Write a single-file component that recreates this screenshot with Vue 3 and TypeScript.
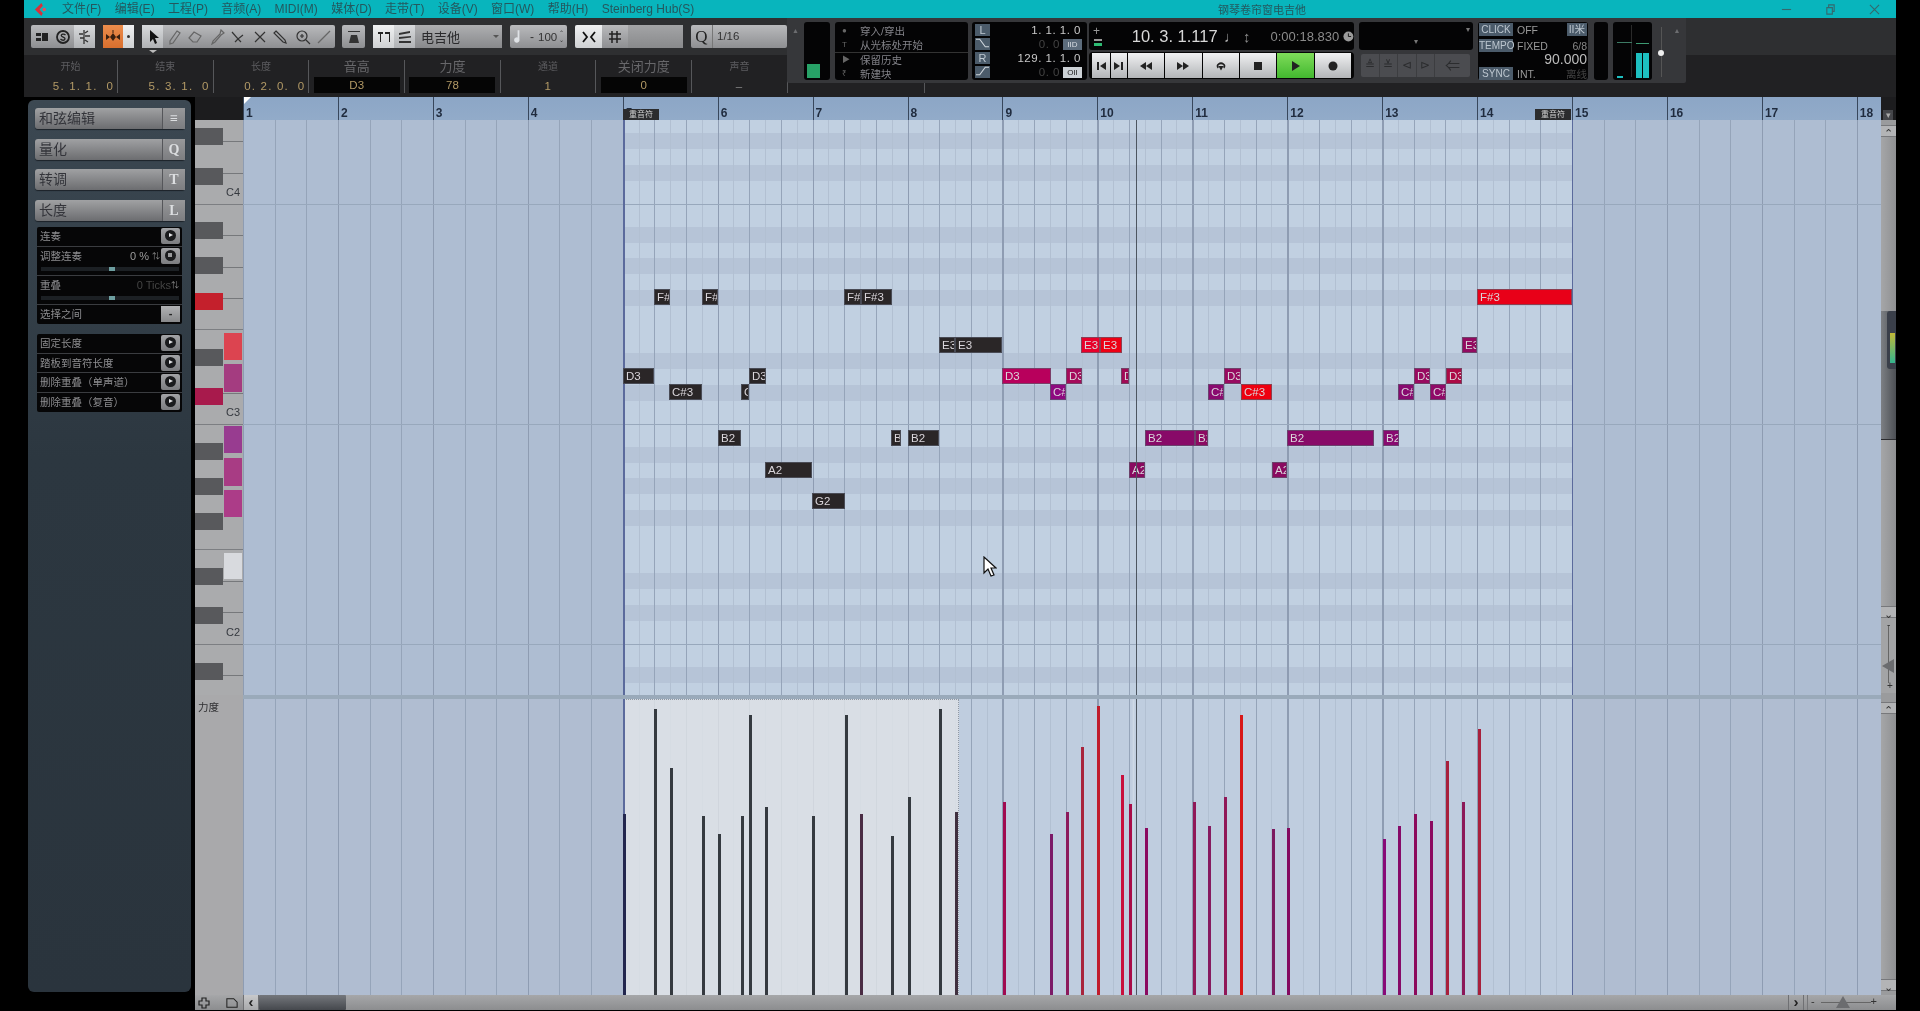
<script setup lang="ts">
const menus = ['文件(F)', '编辑(E)', '工程(P)', '音频(A)', 'MIDI(M)', '媒体(D)', '走带(T)', '设备(V)', '窗口(W)', '帮助(H)', 'Steinberg Hub(S)']

const infoCols = [
  { label: '开始', value: '5. 1. 1.  0', pos: true },
  { label: '结束', value: '5. 3. 1.  0', pos: true },
  { label: '长度', value: '0. 2. 0.  0', pos: true },
  { label: '音高', value: 'D3', big: true },
  { label: '力度', value: '78', big: true },
  { label: '通道', value: '1' },
  { label: '关闭力度', value: '0', big: true },
  { label: '声音', value: '–' }
]

const toolIcons = [
  'M5 1v12l3-3 2 5 2-1-2-5h4z',
  'M11 2l3 2-7 10-3 1 0-3z',
  'M2 9l5-6 7 4-4 6H6z',
  'M12 1l3 3-3 2-6 7-3 2 1-3 7-7z',
  'M2 3l6 7 5-4M8 10l-3 3M8 10l3 3',
  'M3 3l10 10M13 3L3 13',
  'M3 2l9 9 1 3-3-1-9-9z',
  'M7 2a5 5 0 1 1 0 10a5 5 0 0 1 0-10M11 11l4 4M7 5v4M5 7h4',
  'M2 14L14 2'
]

const BAR = 94.93
const ORIGIN = 243.5
const LOOP_START = 623.4
const LOOP_END = 1572.4

const bars = Array.from({ length: 18 }, (_, i) => ({ n: i + 1, x: (i * BAR) }))

// grid lines: bars, thirds of a bar, and sixths inside the locators
const gridLines: { x: number; w: number; c: string }[] = []
for (let i = 0; i < 104; i++) {
  const x = (i * BAR) / 6
  const abs = x + ORIGIN
  if (i % 6 === 0) gridLines.push({ x, w: 1.4, c: '#8e9cb2' })
  else if (i % 2 === 0) gridLines.push({ x, w: 1, c: '#95a4b9' })
  else if (abs > LOOP_START && abs < LOOP_END) gridLines.push({ x, w: 1, c: '#b2c0d2' })
}

const cLines = [204, 424, 644]
const bands = [133, 165, 227, 258, 290, 353, 385, 447, 478, 510, 573, 605, 667]

const blackKeys = [
  { y: 128 }, { y: 168 }, { y: 222 }, { y: 257 }, { y: 293, c: '#c4202c' }, { y: 349 }, { y: 388, c: '#a81a4c' },
  { y: 443 }, { y: 478 }, { y: 513 }, { y: 568 }, { y: 607 }, { y: 663 }
]
const whiteKeys = [
  { y: 333, h: 27, c: '#dc4450' }, { y: 364, h: 28, c: '#a43c80' }, { y: 426, h: 27, c: '#983c90' },
  { y: 458, h: 28, c: '#a83c84' }, { y: 490, h: 27, c: '#ac3c88' }, { y: 553, h: 26, c: '#d8dade' }
]
const keyLines = [141, 173, 235, 267, 298, 393, 581, 612, 675]
const keyFull = [204, 329, 424, 549, 644]
const keyLabels = [{ t: 'C4', y: 185 }, { t: 'C3', y: 405 }, { t: 'C2', y: 625 }]

type Note = [string, number, number, number, string]
const DARK = '#2a2627'
const PUR = '#880a68'
const notes: Note[] = [
  ['F#', 654, 670, 289, DARK], ['F#', 702, 718, 289, DARK], ['F#', 844, 861, 289, DARK], ['F#3', 861, 892, 289, DARK],
  ['E3', 939, 955, 337, DARK], ['E3', 955, 1002, 337, DARK], ['D3', 623, 654, 368, DARK], ['C#3', 669, 702, 384, DARK],
  ['D3', 749, 766, 368, DARK], ['C', 741, 749, 384, DARK], ['B2', 718, 741, 430, DARK], ['B', 891, 901, 430, DARK],
  ['B2', 908, 939, 430, DARK], ['A2', 765, 812, 462, DARK], ['G2', 812, 845, 493, DARK],
  ['D3', 1002, 1051, 368, '#b8005c'], ['C#', 1050, 1066, 384, '#8e0a80'], ['D3', 1066, 1082, 368, '#a50a5a'],
  ['E3', 1081, 1100, 337, '#e8002a'], ['E3', 1100, 1122, 337, '#ee0014'], ['D', 1121, 1129, 368, '#a00a55'],
  ['A2', 1129, 1145, 462, '#8a0a60'], ['B2', 1145, 1195, 430, PUR], ['B2', 1195, 1208, 430, '#8c0a62'],
  ['C#', 1208, 1224, 384, '#8a0a70'], ['D3', 1224, 1241, 368, '#980a60'], ['C#3', 1241, 1272, 384, '#ee0010'],
  ['A2', 1272, 1287, 462, '#8a0a60'], ['B2', 1287, 1374, 430, PUR], ['B2', 1383, 1399, 430, '#880a70'],
  ['C#', 1398, 1414, 384, '#880a70'], ['D3', 1414, 1430, 368, '#980a60'], ['C#', 1430, 1446, 384, '#900a68'],
  ['D3', 1446, 1462, 368, '#ac0a45'], ['E3', 1462, 1477, 337, '#920a60'], ['F#3', 1477, 1572, 289, '#e80018']
]

// [x, top, colour] in screen pixels
const vel: [number, number, string][] = [
  [622.5, 814, '#22264e'], [654, 709, '#353a40'], [669.5, 768, '#353a40'], [701.5, 816, '#353a40'], [717.5, 834, '#353a40'],
  [741, 816, '#353a40'], [748.5, 715, '#353a40'], [765, 807, '#353a40'], [812, 816, '#353a40'], [844.5, 715, '#353a40'],
  [860, 814, '#4a2c44'], [891, 836, '#353a40'], [907.5, 797, '#353a40'], [938.5, 709, '#353a40'], [954.5, 812, '#40303f'],
  [1002.5, 802, '#a00a50'], [1050, 834, '#7c1a68'], [1065.5, 812, '#8c1a5c'], [1081, 747, '#a8243c'], [1096.5, 706, '#c01c2c'],
  [1121, 775, '#c8103c'], [1129, 804, '#a80c48'], [1144.5, 828, '#8a0a60'], [1192.5, 802, '#901858'], [1208, 826, '#861a60'],
  [1223.5, 797, '#901858'], [1240, 715, '#d81818'], [1271.5, 829, '#7c1a60'], [1287, 828, '#840a60'], [1382.5, 839, '#880a78'],
  [1398, 826, '#860a68'], [1413.5, 814, '#8c0a5c'], [1429.5, 821, '#8c0a60'], [1446, 761, '#a8203c'], [1461.5, 802, '#8c1858'],
  [1477.5, 729, '#a8203c']
]

const sideButtons = [
  { label: '和弦编辑', key: '≡' }, { label: '量化', key: 'Q' }, { label: '转调', key: 'T' }, { label: '长度', key: 'L' }
]
const sideBottom = ['固定长度', '踏板到音符长度', '删除重叠（单声道）', '删除重叠（复音）']
</script>

<template>
  <div class="app">
    <header class="titlebar">
      <svg class="logo" viewBox="0 0 16 16"><path d="M9 1L2 8l7 7 1.500-3L7 8l3.500-4z" fill="#d8303a" /><circle cx="12" cy="8" r="1.800" fill="#e8505a" /></svg>
      <nav class="menus"><span v-for="m in menus" :key="m">{{ m }}</span></nav>
      <span class="wintitle">钢琴卷帘窗电吉他</span>
      <div class="winbtns">
        <svg viewBox="0 0 12 12"><path d="M1 6h10" /></svg>
        <svg viewBox="0 0 12 12"><path d="M2 4h6v7H2zM4 4V1h6v7H8" /></svg>
        <svg viewBox="0 0 12 12"><path d="M1 1l10 10M11 1L1 11" /></svg>
      </div>
    </header>

    <section class="toolbar">
      <div class="group g-a">
        <div class="cell"><svg viewBox="0 0 16 16"><path d="M2 4h5v3H2zM2 9h5v3H2zM8 4h6v8H8z" fill="#222" /></svg></div>
        <div class="cell"><svg viewBox="0 0 16 16"><circle cx="8" cy="8" r="6" fill="none" stroke="#222" stroke-width="1.8" /><path d="M10.5 6C9 4.5 6 5 6.3 6.7S10 8 10 9.8 7 11.800 5.500 10" fill="none" stroke="#222" stroke-width="1.300" /></svg></div>
        <div class="cell light"><svg viewBox="0 0 16 16"><path d="M8 1v14M3 5h4M9 4l3-2M9 7h5M4 9h4M9 11l3 2" fill="none" stroke="#333" stroke-width="1.300" /></svg></div>
      </div>
      <div class="group g-o">
        <div class="cell orange"><svg viewBox="0 0 16 16"><path d="M1 5l4 3-4 3zM15 5l-4 3 4 3zM8 4l3 4-3 4-3-4zM7.500 1h1v3h-1z" fill="#3a2010" /></svg></div>
        <div class="cell white"><i class="dot"></i></div>
      </div>
      <div class="group g-t">
        <div v-for="(d, i) in toolIcons" :key="i" class="cell" :class="{ light: i === 0 }">
          <svg viewBox="0 0 16 16"><path :d="d" :fill="i === 0 ? '#111' : 'none'" :stroke="i === 0 ? 'none' : i > 3 && i < 8 ? '#333' : '#666'" stroke-width="1.200" /></svg>
        </div>
        <i class="tool-mark"></i>
      </div>
      <div class="group g-b">
        <div class="cell"><svg viewBox="0 0 16 16"><path d="M2 2h12v1H2zM3 14l2-8h6l2 8z" fill="#333" /></svg></div>
      </div>
      <div class="group g-s">
        <div class="cell white sq"><svg viewBox="0 0 16 16"><path d="M2 3h5v2H5v8H4V5H2zM9 3h5v10h-1V5H9z" fill="#222" /></svg></div>
        <div class="cell light sq"><svg viewBox="0 0 16 16"><path d="M2 4l11-2v2L2 6zM2 8l12-1v1.500L2 10zM2 12h12v2H2z" fill="#333" /></svg></div>
        <div class="select">电吉他<i class="caret"></i></div>
      </div>
      <div class="group g-v">
        <svg class="note-ic" viewBox="0 0 10 16"><path d="M6 1v10a3 3 0 1 1-2-2V1z" fill="#dfe2e6" /></svg>
        <span class="dash">-</span><span class="v100">100</span><span class="spin">⌃<br />⌄</span>
      </div>
      <div class="group g-q">
        <div class="cell white q1"><svg viewBox="0 0 16 16"><path d="M2 3l4 5-4 5M14 3l-4 5 4 5" fill="none" stroke="#111" stroke-width="1.800" /></svg></div>
        <div class="cell q2"><svg viewBox="0 0 16 16"><path d="M5 2v12M10 2v12M2 5h12M2 10h12" fill="none" stroke="#222" stroke-width="1.500" /></svg></div>
        <div class="q-rest"></div>
      </div>
      <div class="group g-z">
        <div class="zq">Q</div>
        <div class="zv">1/16</div>
      </div>

      <div class="transport">
        <div class="tp-arrow">▲</div>
        <div class="box b-meter"><i class="green"></i></div>
        <div class="box b-punch">
          <div class="pr"><i>●</i>穿入/穿出</div>
          <div class="pr under"><i>T</i>从光标处开始</div>
          <div class="pr"><i>▶</i>保留历史</div>
          <div class="pr"><i>₹</i>新建块</div>
        </div>
        <div class="box b-loc">
          <div class="lr"><b class="tag">L</b><span class="lv">1. 1. 1.  0</span></div>
          <div class="lr"><b class="tag"><svg viewBox="0 0 14 10"><path d="M0 1h4l6 8h4" fill="none" stroke="#cfd6dc" stroke-width="1.200" /></svg></b><span class="lv dim short">0.  0</span><b class="mini">IID</b></div>
          <div class="lr"><b class="tag">R</b><span class="lv">129. 1. 1.  0</span></div>
          <div class="lr"><b class="tag"><svg viewBox="0 0 14 10"><path d="M0 9h4l6-8h4" fill="none" stroke="#cfd6dc" stroke-width="1.200" /></svg></b><span class="lv dim short">0.  0</span><b class="mini lit">OII</b></div>
        </div>
        <div class="main-col">
          <div class="box time">
            <div class="pm"><span>+</span><i></i><i class="g"></i></div>
            <span class="t1">10. 3. 1.117</span>
            <span class="t-note">♩</span><span class="t-arr">↕</span>
            <span class="t2">0:00:18.830</span>
            <svg class="clock" viewBox="0 0 12 12"><circle cx="6" cy="6" r="5.500" fill="#9a9a9a" /><path d="M6 2.500V6h3" fill="none" stroke="#111" /></svg>
          </div>
          <div class="tbtns">
            <div class="tb w18"><svg viewBox="0 0 12 12"><path d="M2 2h2v8H2zM11 2v8L5 6z" /></svg></div>
            <div class="tb w17"><svg viewBox="0 0 12 12"><path d="M10 2H8v8h2zM1 2v8l6-4z" /></svg></div>
            <div class="tb"><svg viewBox="0 0 14 12"><path d="M7 2v8L1 6zM13 2v8L7 6z" /></svg></div>
            <div class="tb"><svg viewBox="0 0 14 12"><path d="M1 2v8l6-4zM7 2v8l6-4z" /></svg></div>
            <div class="tb"><svg viewBox="0 0 16 12"><path d="M5 8a4 3 0 1 1 6 0" fill="none" stroke="#222" stroke-width="2" /><path d="M5 6h6l-3 5z" /></svg></div>
            <div class="tb"><svg viewBox="0 0 12 12"><path d="M2 2h8v8H2z" /></svg></div>
            <div class="tb play"><svg viewBox="0 0 12 12"><path d="M3 1v10l8-5z" /></svg></div>
            <div class="tb"><svg viewBox="0 0 12 12"><circle cx="6" cy="6" r="4.500" /></svg></div>
          </div>
        </div>
        <div class="mark-col">
          <div class="box marks"><i class="c1">▾</i><i class="c2">▾</i></div>
          <div class="mbtns">
            <span>≜</span><span>≚</span><span>⊲</span><span>⊳</span><span class="wide">⇐</span>
          </div>
        </div>
        <div class="box b-click">
          <div class="cr"><b>CLICK</b><span>OFF</span><em class="btn">II米</em></div>
          <div class="cr"><b>TEMPO</b><span>FIXED</span><em>6/8</em></div>
          <div class="cr big"><em>90.000</em></div>
          <div class="cr"><b>SYNC</b><span>INT.</span><em class="off">离线</em></div>
        </div>
        <div class="box b-thin"></div>
        <div class="box b-vu">
          <i class="vline"></i><i class="t-l"></i><i class="t-r"></i><i class="bar-a"></i><i class="bar-b"></i><i class="blue"></i>
        </div>
        <div class="vol"><i class="track"></i><i class="knob"></i></div>
        <div class="tp-arrow right">▲</div>
      </div>
    </section>

    <section class="infoline">
      <div v-for="c in infoCols" :key="c.label" class="info" :class="{ big: c.big, pos: c.pos }">
        <span class="il">{{ c.label }}</span>
        <span class="iv">{{ c.value }}</span>
      </div>
      <div class="info plain"></div>
    </section>

    <main class="body">
      <aside class="side">
        <div class="side-in">
          <div v-for="b in sideButtons" :key="b.label" class="sbtn">
            <span class="sl">{{ b.label }}</span><span class="sk">{{ b.key }}</span>
          </div>
          <div class="sbox first">
            <div class="row r18"><span>连奏</span><b class="go"></b></div>
            <div class="row r28">
              <div class="rtop"><span>调整连奏</span><em>0 %</em><u>⇅</u><b class="go alt"></b></div>
              <div class="slide"><i></i></div>
            </div>
            <div class="row r28">
              <div class="rtop"><span>重叠</span><em class="dim">0 Ticks</em><u>⇅</u></div>
              <div class="slide"><i></i></div>
            </div>
            <div class="row r18"><span>选择之间</span><b class="minus">-</b></div>
          </div>
          <div class="sbox">
            <div v-for="s in sideBottom" :key="s" class="row r19"><span>{{ s }}</span><b class="go"></b></div>
          </div>
        </div>
      </aside>

      <div class="editor">
        <div class="ruler-row">
          <div class="corner"></div>
          <div class="ruler">
            <i class="start"></i>
            <template v-for="b in bars" :key="b.n">
              <i class="rline" :style="{ left: b.x + 'px' }"></i>
              <b class="rnum" :style="{ left: b.x + 3 + 'px' }">{{ b.n }}</b>
            </template>
            <span class="flag fl">重音符</span>
            <span class="flag fr">重音符</span>
          </div>
        </div>

        <div class="note-row">
          <div class="keys">
            <i v-for="y in keyLines" :key="y" class="kline" :style="{ top: y - 120 + 'px' }"></i>
            <i v-for="y in keyFull" :key="y" class="kfull" :style="{ top: y - 120 + 'px' }"></i>
            <i v-for="k in blackKeys" :key="k.y" class="kblack" :style="{ top: k.y - 120 + 'px', background: k.c }"></i>
            <i v-for="k in whiteKeys" :key="k.y" class="kwhite" :style="{ top: k.y - 120 + 'px', height: k.h + 'px', background: k.c }"></i>
            <span v-for="k in keyLabels" :key="k.t" class="klabel" :style="{ top: k.y - 120 + 'px' }">{{ k.t }}</span>
          </div>
          <div class="grid">
            <div class="loop"></div>
            <i v-for="y in bands" :key="y" class="band" :style="{ top: y - 120 + 'px' }"></i>
            <i v-for="l in gridLines" :key="l.x" class="vl" :style="{ left: l.x + 'px', width: l.w + 'px', background: l.c }"></i>
            <i v-for="y in cLines" :key="y" class="hl" :style="{ top: y - 120 + 'px' }"></i>
            <i class="loc ll"></i><i class="loc lr2"></i>
            <div v-for="n in notes" :key="n[0] + n[1]" class="note"
              :style="{ left: n[1] - 243 + 'px', width: n[2] - n[1] + 'px', top: n[3] - 120 + 'px', background: n[4] }">{{ n[0] }}</div>
            <i class="playhead"></i>
            <svg class="cursor" viewBox="0 0 14 22"><path d="M1 1v16l4-4 3 7 3-1-3-7h5z" fill="#fff" stroke="#111" stroke-width="1.200" /></svg>
          </div>
        </div>

        <div class="lane-sep"></div>

        <div class="vel-row">
          <div class="lane-label"><span>力度</span></div>
          <div class="vel">
            <div class="vloop"></div>
            <i v-for="l in gridLines" :key="l.x" class="vl" :style="{ left: l.x + 'px', width: l.w + 'px', background: l.c }"></i>
            <div class="sel"></div>
            <i class="loc ll"></i><i class="loc lr2"></i>
            <i class="playhead glow"></i>
            <i v-for="v in vel" :key="v[0]" class="vbar"
              :style="{ left: v[0] - 243 + 'px', top: v[1] - 699 + 'px', background: v[2] }"></i>
          </div>
        </div>
      </div>

      <div class="vscroll">
        <div class="vs-top"><i>▾</i></div>
        <div class="vs-arrow">⌃</div>
        <div class="vs-track">
          <div class="vs-thumb">
            <div class="float"><i></i></div>
          </div>
        </div>
        <div class="vs-arrow">⌄</div>
        <div class="vs-zoom"><span>-</span><i class="zl"></i><i class="zt"></i><span class="plus">+</span></div>
        <div class="vs-arrow up2">⌃</div>
        <div class="vs-track lower"></div>
        <div class="vs-arrow">⌄</div>
      </div>
    </main>

    <footer class="bottom">
      <div class="bb-left">
        <svg viewBox="0 0 12 12"><path d="M4 1h4v3h3v4H8v3H4V8H1V4h3z" fill="none" stroke="#222" stroke-width="1.200" /></svg>
        <svg viewBox="0 0 14 12"><path d="M1 1h8l4 4v6H1z" fill="none" stroke="#222" stroke-width="1.200" /></svg>
      </div>
      <div class="bb-arrow lit">‹</div>
      <div class="bb-thumb"></div>
      <div class="bb-track"></div>
      <div class="bb-arrow">›</div>
      <div class="bb-zoom"><span>-</span><i class="zl"></i><i class="zt"></i><span>+</span></div>
    </footer>
  </div>
</template>

<style>
html, body { background: #000; overflow: hidden; }
</style>

<style scoped>
.app {
  width: 1920px;
  height: 1011px;
  box-sizing: border-box;
  padding: 0 24px;
  background: #000;
  display: flex;
  flex-direction: column;
  font-family: "Liberation Sans", "Noto Sans CJK SC", sans-serif;
  filter: blur(0.65px);
  overflow: hidden;
}
i, em, u { font-style: normal; text-decoration: none; display: block; }

.titlebar { height: 18px; background: #08b5bd; display: flex; align-items: center; position: relative; flex: none; }
.logo { width: 15px; height: 15px; margin-left: 9px; }
.menus { display: flex; align-items: center; margin-left: 14px; font-size: 12px; line-height: 18px; height: 18px; color: #24585e; gap: 13.300px; white-space: nowrap; }
.menus span { display: block; height: 18px; }
.wintitle { position: absolute; left: 1194px; font-size: 11px; color: #24585e; }
.winbtns { position: absolute; right: 16px; display: flex; gap: 33px; }
.winbtns svg { width: 11px; height: 11px; fill: none; stroke: #35686d; stroke-width: 1.200; }

.toolbar { height: 37px; box-sizing: border-box; background: #2e2f31; display: flex; align-items: flex-start; padding: 7px 0 0 7px; position: relative; flex: none; }
.group { height: 23px; display: flex; border-radius: 2px; background: linear-gradient(#b9babc, #8e8f92); margin-right: 8px; flex: none; position: relative; }
.cell { flex: 1; display: flex; align-items: center; justify-content: center; }
.cell svg { width: 16px; height: 16px; }
.cell.light { background: linear-gradient(#d8dadc, #b0b2b5); }
.cell.white { background: linear-gradient(#f0f1f2, #cfd1d3); }
.cell.orange { background: linear-gradient(#ec8d4c, #d96f2e); flex: none; width: 20px; }
.g-a { width: 64px; }
.g-o { width: 31px; }
.g-o .white { flex: 1; }
.dot { width: 3px; height: 3px; background: #333; border-radius: 50%; }
.g-t { width: 193px; margin-right: 7px; }
.g-t .cell:first-child { flex: none; width: 21px; }
.tool-mark { position: absolute; left: 7px; top: 25px; border: 4px solid transparent; border-top: 3px solid #bbb; }
.g-b { width: 23px; }
.g-s { width: 129px; }
.sq { flex: none; width: 21px; }
.select { flex: 1; display: flex; align-items: center; padding-left: 6px; font-size: 13px; color: #2a2a2c; position: relative; background: linear-gradient(#aeafb1, #88898c); }
.caret { position: absolute; right: 3px; top: 10px; border: 3px solid transparent; border-top: 3px solid #555; }
.g-v { width: 57px; align-items: center; font-size: 12px; color: #333; }
.note-ic { width: 9px; height: 15px; margin-left: 4px; }
.dash { margin-left: 7px; }
.v100 { margin-left: 4px; font-size: 11.500px; }
.spin { font-size: 6px; line-height: 7px; margin-left: 2px; }
.g-q { width: 108px; background: linear-gradient(#5f6063, #4d4e51); }
.q1 { flex: none; width: 27px; border-radius: 2px 0 0 2px; }
.q2 { flex: none; width: 26px; background: linear-gradient(#b9babc, #8e8f92); }
.q-rest { flex: 1; background: linear-gradient(#a3a4a6, #898a8c); }
.g-z { width: 96px; margin-right: 0; }
.zq { width: 21px; font-family: "Liberation Serif", serif; font-size: 17px; color: #222; text-align: center; line-height: 23px; }
.zv { flex: 1; border-left: 1px solid #777; font-size: 11.500px; color: #333; line-height: 23px; padding-left: 4px; }

.transport {
  position: absolute; left: 763px; top: 0; width: 899px; height: 65px;
  background: #36373a; display: flex; align-items: flex-start; padding-top: 4px; box-sizing: border-box; border-radius: 0 0 2px 2px;
  color: #9a9a9a;
}
.tp-arrow { width: 17px; font-size: 7px; color: #6c6d70; text-align: center; padding-top: 5px; flex: none; }
.tp-arrow.right { width: 16px; }
.box { background: #040405; border-radius: 3px; height: 58px; flex: none; position: relative; }
.b-meter { width: 26px; margin-right: 5px; }
.green { position: absolute; left: 3px; bottom: 2px; width: 13px; height: 14px; background: #27a267; }
.b-punch { width: 133px; margin-right: 4px; box-sizing: border-box; }
.pr { height: 14px; line-height: 14px; font-size: 10.500px; color: #84848a; padding-left: 25px; position: relative; }
.pr:first-child { margin-top: 2px; }
.pr.under { border-bottom: 1px solid #333; height: 15px; box-sizing: border-box; }
.pr i { position: absolute; left: 7px; top: 0; font-size: 8px; color: #666; }
.b-loc { width: 115px; margin-right: 2px; padding-top: 1px; box-sizing: border-box; }
.lr { height: 14px; display: flex; align-items: center; position: relative; }
.tag { width: 15px; height: 12px; margin-left: 3px; background: #4b5b6a; color: #bfc9d2; font-size: 11px; line-height: 12px; text-align: center; font-weight: 400; flex: none; }
.tag svg { width: 13px; height: 10px; }
.lv { position: absolute; right: 6px; font-size: 11.500px; color: #c9c9c9; white-space: pre; letter-spacing: 0.5px; }
.lv.dim { color: #444; }
.lv.short { right: 27px; }
.mini { position: absolute; right: 5px; width: 19px; height: 11px; background: #5c6c7c; color: #d8dde2; font-size: 8px; line-height: 11px; text-align: center; font-weight: 400; }
.mini.lit { background: #cdd2d6; color: #222; }
.main-col { width: 265px; margin-right: 5px; flex: none; }
.time { height: 28px; display: flex; align-items: center; width: 100%; }
.pm { width: 14px; margin-left: 4px; font-size: 12px; color: #999; line-height: 11px; }
.pm i { width: 8px; height: 2px; background: #999; margin: 2px 0 0 1px; }
.pm .g { background: #2dbb72; height: 3px; }
.t1 { margin-left: 25px; font-size: 16.500px; color: #d8d8d8; white-space: pre; width: 92px; }
.t-note { font-size: 15px; color: #aaa; margin-left: 2px; }
.t-arr { font-size: 15px; color: #888; margin-left: 4px; }
.t2 { margin-left: 20px; font-size: 13px; color: #8b8b8b; }
.clock { width: 11px; height: 11px; margin-left: 4px; }
.tbtns { height: 27px; margin-top: 2px; background: #050505; border-radius: 4px; padding: 1px 3px; box-sizing: border-box; display: flex; gap: 1px; }
.tb { flex: 1; background: linear-gradient(#f0f1f2, #b3b5b8); display: flex; align-items: center; justify-content: center; }
.tb svg { width: 14px; height: 12px; fill: #222; }
.tb.w18 { flex: none; width: 18px; }
.tb.w17 { flex: none; width: 16px; }
.tb.play { background: linear-gradient(#7fdc5a, #42b82f); }
.mark-col { width: 114px; margin-right: 5px; flex: none; }
.marks { height: 28px; color: #777; font-size: 8px; }
.c1 { position: absolute; right: 3px; top: 3px; }
.c2 { position: absolute; left: 55px; top: 15px; }
.mbtns { margin: 4px 3px 0 2px; height: 23px; display: flex; background: #4b4c50; border-radius: 2px; color: #2b2c2e; font-size: 12px; line-height: 23px; text-align: center; }
.mbtns span { flex: 1; border-right: 1px solid #3c3d40; }
.mbtns .wide { flex: 2; font-size: 15px; border: 0; }
.b-click { width: 110px; margin-right: 6px; font-size: 10.500px; padding-top: 1px; box-sizing: border-box; }
.cr { display: flex; align-items: center; height: 13px; margin-bottom: 3px; position: relative; color: #9a9a9a; }
.cr.big { margin: -2px 0 3px; height: 11px; }
.cr b { width: 34px; margin-left: 1px; height: 13px; background: #4b5b6a; color: #bcc6cf; font-weight: 400; line-height: 13px; text-align: center; font-size: 10px; flex: none; }
.cr span { margin-left: 4px; }
.cr em { position: absolute; right: 1px; color: #888; }
.cr.big em { font-size: 14px; color: #bbb; }
.cr .btn { background: #4b5b6a; color: #bcc6cf; padding: 0 2px; height: 13px; line-height: 13px; }
.cr .off { color: #444; }
.b-thin { width: 14px; margin-right: 5px; }
.b-vu { width: 39px; margin-right: 3px; }
.b-vu i { position: absolute; }
.vline { left: 18px; top: 3px; bottom: 3px; width: 1px; background: #2a2a2a; }
.t-l { left: 4px; top: 20px; width: 15px; height: 1px; background: #3c7a64; }
.t-r { left: 23px; top: 21px; width: 13px; height: 1px; background: #3c9a72; }
.bar-a { left: 23px; top: 31px; width: 6px; height: 25px; background: #1dbfc0; }
.bar-b { left: 30px; top: 31px; width: 6px; height: 25px; background: #1dbfc0; }
.blue { left: 4px; top: 54px; width: 6px; height: 2px; background: #1dbfc0; }
.vol { width: 12px; height: 58px; position: relative; flex: none; margin-right: 2px; }
.track { position: absolute; left: 6px; top: 5px; bottom: 3px; width: 1px; background: #555; }
.knob { position: absolute; left: 3px; top: 28px; width: 6px; height: 6px; border-radius: 50%; background: #eee; }

.infoline { height: 42px; background: #212123; display: flex; padding-top: 5px; box-sizing: border-box; flex: none; }
.info { width: 95.700px; box-sizing: border-box; border-right: 1px solid #56575a; height: 33px; display: flex; flex-direction: column; align-items: center; flex: none; }
.info:first-child { width: 94px; }
.info.plain { width: 137px; }
.il { height: 15px; font-size: 10px; line-height: 14px; color: #5d5d60; }
.iv { font-size: 11.500px; color: #b39a66; white-space: pre; margin-top: 5px; letter-spacing: 1px; }
.info.pos .iv { align-self: flex-end; margin-right: 3px; letter-spacing: 1.200px; }
.info.big .il { font-size: 13px; color: #67676a; }
.info.big .iv { width: 86px; height: 16px; background: #050505; text-align: center; margin-top: 2px; line-height: 16px; letter-spacing: 0; }
.info:nth-child(8) .iv { color: #888; }

.body { flex: 1; display: flex; min-height: 0; }
.side { width: 171px; flex: none; box-sizing: border-box; padding: 3px 4px; background: #000; }
.side-in { height: 100%; box-sizing: border-box; padding: 8px 6px; background: linear-gradient(#3c4852, #2c3740 40%, #2a343d); border-radius: 6px; }
.sbtn { height: 21px; margin-bottom: 9.500px; border-radius: 3px; background: linear-gradient(#a0a1a3, #6c6d70); display: flex; box-shadow: 0 1px 1px #1c2228; margin-left: 1px; }
.sl { flex: 1; font-size: 14px; color: #33343a; line-height: 21px; padding-left: 4px; }
.sk { width: 22px; border-left: 1px solid #55565a; text-align: center; color: #dcdee0; font: 700 14px/21px "Liberation Serif", serif; background: linear-gradient(#97989a, #7c7d80); }
.sbox { background: #060607; border-radius: 2px; margin: 0 2px 10px 3px; width: 145px; }
.first { margin-top: -3px; }
.row { color: #8d8d90; font-size: 10.500px; position: relative; border-bottom: 1px solid #3a3c40; box-sizing: border-box; padding-left: 3px; }
.row:last-child { border-bottom: 0; }
.r18 { height: 19.500px; line-height: 18px; }
.r19 { height: 19.500px; line-height: 19px; }
.r28 { height: 29px; }
.rtop { height: 19px; line-height: 19px; position: relative; }
.rtop em { position: absolute; right: 33px; top: 0; font-size: 11px; color: #9c9c9c; }
.rtop em.dim { color: #444; right: 11px; }
.rtop u { position: absolute; right: 22px; top: 0; font-size: 8px; color: #888; }
.rtop .dim + u { right: 3px; }
.go { position: absolute; right: 2px; top: 1px; width: 19px; height: 16px; border-radius: 2px; background: linear-gradient(#a2a3a6, #7c7d80); }
.go::after { content: ""; position: absolute; left: 4px; top: 2px; width: 11px; height: 11px; border-radius: 50%; background: #1a1b1d; }
.go::before { content: ""; position: absolute; z-index: 1; left: 8px; top: 5px; border: 2.500px solid transparent; border-left: 4px solid #e2e3e5; border-right: 0; }
.go.alt::before { left: 7px; border: 2.500px solid #9a9b9d; }
.minus { position: absolute; right: 2px; top: 1px; width: 19px; height: 16px; background: linear-gradient(#b0b1b3, #88898b); color: #222; text-align: center; line-height: 14px; font-size: 11px; }
.slide { height: 4px; margin: 1px 3px 0 1px; background: #1c2024; position: relative; }
.slide i { position: absolute; left: 68px; top: 0; width: 6px; height: 4px; background: #6d9ea0; }

.editor { width: 1686px; flex: none; display: flex; flex-direction: column; }
.ruler-row { height: 23px; display: flex; flex: none; }
.corner { width: 48px; background: #1c1c1e; }
.ruler { flex: 1; background: linear-gradient(#8ca6c6, #92abc9); position: relative; overflow: hidden; }
.start { position: absolute; left: 0; top: 0; border: 4px solid transparent; border-top: 4px solid #fff; border-left: 4px solid #fff; }
.rline { position: absolute; top: 0; bottom: 0; width: 1px; background: #38475c; }
.rnum { position: absolute; top: 9px; font-size: 12px; color: #1f2b3e; }
.flag { position: absolute; height: 11px; background: #2b2c2e; color: #d0d0d0; font-size: 8px; line-height: 11px; bottom: 0; text-align: center; white-space: nowrap; overflow: hidden; z-index: 1; }
.fl { left: 380px; width: 36px; }
.fr { left: 1292px; width: 36px; }

.note-row { height: 575px; display: flex; flex: none; }
.keys { width: 48px; background: #aaabad; position: relative; overflow: hidden; flex: none; }
.kline { position: absolute; left: 28px; right: 0; height: 1px; background: #76787b; }
.kfull { position: absolute; left: 0; right: 0; height: 1px; background: #7c7e82; }
.kblack { position: absolute; left: 0; width: 28px; height: 17px; background: #58595c; }
.kwhite { position: absolute; left: 29px; width: 18px; }
.klabel { position: absolute; right: 3px; font-size: 11px; line-height: 14px; color: #35393f; }

.grid { width: 1638px; flex: none; background: #aebdd2; position: relative; overflow: hidden; }
.loop { position: absolute; left: 380px; width: 949px; top: 0; bottom: 0; background: #c1d0e1; }
.band { position: absolute; left: 380px; width: 949px; height: 16px; background: #b6c4d7; }
.vl { position: absolute; top: 0; bottom: 0; }
.hl { position: absolute; left: 0; right: 0; height: 1px; background: #98a8bc; }
.loc { position: absolute; top: 0; bottom: 0; width: 1.500px; background: #5b6a9c; }
.ll { left: 380px; }
.lr2 { left: 1328.500px; }
.note {
  position: absolute; height: 16px; box-sizing: border-box; border: 1px solid rgba(90, 95, 110, .65);
  color: #d9d5da; font-size: 11.500px; line-height: 14px; padding-left: 2px; overflow: hidden; white-space: nowrap;
}
.playhead { position: absolute; left: 892.500px; top: 0; bottom: 0; width: 1.500px; background: #4d5660; }
.glow { box-shadow: -3px 0 2px #dfe6ee; }
.cursor { position: absolute; left: 740px; top: 436px; width: 14px; height: 22px; }

.lane-sep { height: 4px; background: #9aaaba; flex: none; margin-left: 48px; }
.vel-row { flex: 1; display: flex; min-height: 0; position: relative; }
.lane-label { width: 48px; margin-top: -4px; background: #a9a9ab; flex: none; font-size: 10.500px; color: #2f2f32; padding: 4px 0 0 3px; box-sizing: border-box; position: relative; z-index: 1; }
.vel { width: 1638px; background: #b0bdd1; position: relative; overflow: hidden; flex: none; }
.vloop { position: absolute; left: 380px; width: 949px; top: 0; bottom: 0; background: #bfcddf; }
.sel { position: absolute; left: 380px; top: 0; bottom: 0; width: 336px; background: rgba(222, 226, 231, .82); border-top: 1px dotted #8f98a4; border-right: 1px dotted #8f98a4; box-sizing: border-box; }
.vbar { position: absolute; bottom: 0; width: 3.200px; }

.vscroll { width: 15px; flex: none; background: #9a9b9d; display: flex; flex-direction: column; }
.vs-top { height: 23px; box-sizing: border-box; background: #1c1c1e; padding-top: 13px; margin-bottom: 5px; }
.vs-top i { width: 10px; height: 10px; margin-left: 2px; background: #45464a; color: #aaa; font-size: 9px; line-height: 10px; text-align: center; }
.vs-arrow { height: 12px; background: #b3b4b6; border: 1px solid #77787b; border-width: 1px 0; color: #333; font-size: 11px; line-height: 14px; text-align: center; flex: none; box-sizing: border-box; }
.up2 { margin-top: 9px; }
.vs-track { background: linear-gradient(90deg, #a5a6a8, #8f9092); position: relative; height: 469px; flex: none; }
.vs-track.lower { height: 265px; }
.vs-thumb { position: absolute; left: 0; right: 0; top: 174px; height: 129px; background: linear-gradient(90deg, #7d8084, #4c4f54); border-bottom: 1px solid #2c2d30; box-sizing: border-box; }
.float { position: absolute; left: 6px; right: 0; top: 0; height: 58px; background: #3a3f4a; border-radius: 3px 0 0 3px; }
.float i { position: absolute; left: 3px; top: 22px; width: 5px; height: 30px; background: linear-gradient(#c2b838, #34b48e); }
.vs-zoom { height: 75px; position: relative; background: #a3a4a6; color: #333; font-size: 10px; flex: none; }
.vs-zoom span { position: absolute; left: 6px; top: 1px; }
.vs-zoom .plus { top: auto; bottom: 2px; }
.vs-zoom .zl { position: absolute; left: 7px; top: 8px; bottom: 10px; width: 1px; background: #666; }
.vs-zoom .zt { position: absolute; left: 1px; top: 41px; border: 7px solid transparent; border-left: 0; border-right: 12px solid #6b6c6f; }

.bottom { height: 15px; margin: 0 0 1px 171px; background: linear-gradient(#a6a7a9, #8c8d8f); display: flex; align-items: stretch; flex: none; }
.bb-left { width: 48px; display: flex; align-items: center; gap: 16px; padding-left: 3px; box-sizing: border-box; }
.bb-left svg { width: 12px; height: 12px; flex: none; }
.bb-arrow { width: 16px; font-size: 15px; line-height: 13px; color: #222; text-align: center; border-right: 1px solid #6f7073; border-left: 1px solid #6f7073; box-sizing: border-box; font-weight: 700; flex: none; }
.bb-arrow.lit { background: linear-gradient(#c8c9cb, #a7a8aa); }
.bb-thumb { width: 87px; background: linear-gradient(#74777c, #45484d); border-radius: 1px; flex: none; }
.bb-track { width: 1442px; flex: none; }
.bb-zoom { width: 72px; margin-left: 3px; position: relative; color: #333; font-size: 11px; line-height: 13px; display: flex; justify-content: space-between; padding: 0 2px 0 3px; box-sizing: border-box; flex: none; border-left: 1px solid #76777a; }
.bb-zoom .zl { position: absolute; left: 13px; right: 8px; top: 7px; height: 1px; background: #666; }
.bb-zoom .zt { position: absolute; left: 28px; top: 1px; border: 7px solid transparent; border-top: 0; border-bottom: 12px solid #6b6c6f; }
</style>
